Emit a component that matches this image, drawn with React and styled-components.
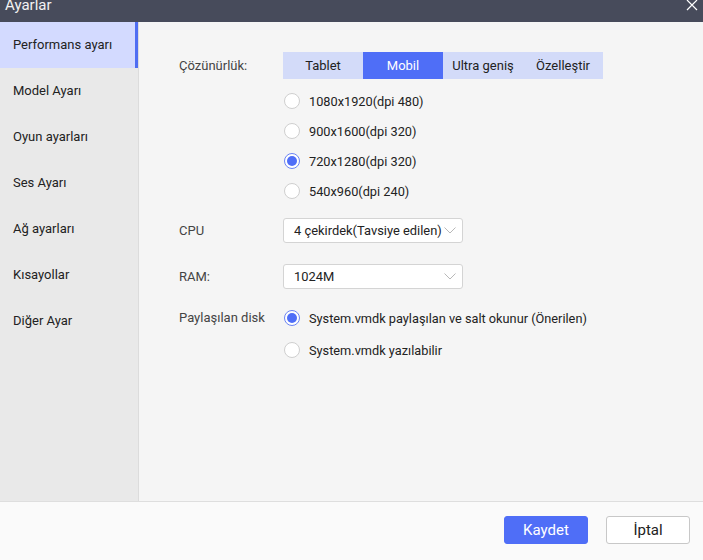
import React, { useState } from 'react'
import styled, { createGlobalStyle } from 'styled-components'

const GlobalStyle = createGlobalStyle`
  html, body {
    margin: 0;
    padding: 0;
    width: 703px;
    height: 560px;
    overflow: hidden;
    font-family: Roboto, "Liberation Sans", Arial, sans-serif;
  }
  * { box-sizing: border-box; }
`

const Window = styled.div`
  width: 703px;
  height: 560px;
  display: flex;
  flex-direction: column;
  background: #f5f5f5;
`

const TitleBar = styled.div`
  height: 22px;
  flex-shrink: 0;
  background: #474b5b;
  display: flex;
  justify-content: space-between;
  align-items: flex-start;
  overflow: hidden;
`

const Title = styled.div`
  color: #f2f2f2;
  font-size: 15px;
  line-height: 10px;
  padding-left: 5px;
`

const Close = styled.div`
  width: 12px;
  height: 12px;
  margin: -1px 5px 0 0;
  svg { display: block; }
`

const Body = styled.div`
  flex: 1;
  display: flex;
  min-height: 0;
`

const Sidebar = styled.div`
  width: 139px;
  flex-shrink: 0;
  background: #e9e9e9;
  border-right: 1px solid #dcdcdc;
`

const NavItem = styled.div`
  height: 46px;
  line-height: 46px;
  padding-left: 13px;
  font-size: 13px;
  color: #222;
  background: ${p => p.active ? '#d3daff' : 'transparent'};
  border-right: 3px solid ${p => p.active ? '#4f6df2' : 'transparent'};
`

const Content = styled.div`
  flex: 1;
  padding: 30px 0 0 40px;
`

const Row = styled.div`
  display: flex;
  align-items: ${p => p.top ? 'flex-start' : 'center'};
  margin-top: ${p => p.mt || 0}px;
`

const Label = styled.div`
  width: 104px;
  flex-shrink: 0;
  font-size: 13px;
  color: #444;
  padding-top: ${p => p.pt || 0}px;
`

const Segments = styled.div`
  display: flex;
  background: #d3dbf9;
`

const Segment = styled.div`
  width: 80px;
  height: 27px;
  line-height: 27px;
  text-align: center;
  font-size: 13px;
  color: ${p => p.active ? '#fff' : '#222'};
  background: ${p => p.active ? '#4f6ef7' : 'transparent'};
`

const RadioList = styled.div`
  display: flex;
  flex-direction: column;
  margin-left: 104px;
  margin-top: 7px;
`

const RadioRow = styled.div`
  height: ${p => p.h || 30}px;
  display: flex;
  align-items: center;
  padding-left: 1px;
  font-size: 12.75px;
  color: #222;
`

const Circle = styled.span`
  width: 16px;
  height: 16px;
  border-radius: 50%;
  background: #fff;
  border: 1px solid ${p => p.checked ? '#6b84f3' : '#cfcfcf'};
  display: flex;
  align-items: center;
  justify-content: center;
  margin-right: 9px;
  flex-shrink: 0;

  &::after {
    content: '';
    width: 10px;
    height: 10px;
    border-radius: 50%;
    background: ${p => p.checked ? '#4f6ef7' : 'transparent'};
  }
`

const Select = styled.div`
  width: 180px;
  height: 25px;
  background: #fff;
  border: 1px solid #d4d4d4;
  border-radius: 3px;
  display: flex;
  align-items: center;
  justify-content: space-between;
  padding: 0 6px 0 10px;
  font-size: 12.9px;
  color: #222;
  svg { flex-shrink: 0; }
`

const Footer = styled.div`
  height: 59px;
  flex-shrink: 0;
  background: #fafafa;
  border-top: 1px solid #dedede;
  display: flex;
  justify-content: flex-end;
  align-items: center;
  gap: 18px;
  padding: 0 13px 2px 0;
`

const Button = styled.button`
  width: 84px;
  height: 28px;
  border-radius: 3px;
  font-family: inherit;
  font-size: 15px;
  cursor: pointer;
  background: ${p => p.primary ? '#4f6ef7' : '#fff'};
  color: ${p => p.primary ? '#fff' : '#222'};
  border: 1px solid ${p => p.primary ? '#4f6ef7' : '#c8c8c8'};
`

const Chevron = () => (
  <svg width="12" height="7" viewBox="0 0 12 7">
    <path d="M0.5 0.5 L6 6 L11.5 0.5" fill="none" stroke="#b8b8b8" strokeWidth="1" />
  </svg>
)

const Radio = ({ checked, children, h }) => (
  <RadioRow h={h}>
    <Circle checked={checked} />
    {children}
  </RadioRow>
)

const navItems = ['Performans ayarı', 'Model Ayarı', 'Oyun ayarları', 'Ses Ayarı', 'Ağ ayarları', 'Kısayollar', 'Diğer Ayar']
const modes = ['Tablet', 'Mobil', 'Ultra geniş', 'Özelleştir']
const resolutions = ['1080x1920(dpi 480)', '900x1600(dpi 320)', '720x1280(dpi 320)', '540x960(dpi 240)']

export default function App () {
  const [mode, setMode] = useState('Mobil')
  const [res, setRes] = useState(2)

  return (
    <Window>
      <GlobalStyle />
      <TitleBar>
        <Title>Ayarlar</Title>
        <Close>
          <svg width="12" height="12" viewBox="0 0 12 12">
            <path d="M1 1 L11 11 M11 1 L1 11" stroke="#fff" strokeWidth="1.2" />
          </svg>
        </Close>
      </TitleBar>
      <Body>
        <Sidebar>
          {navItems.map((n, i) => <NavItem key={n} active={i === 0}>{n}</NavItem>)}
        </Sidebar>
        <Content>
          <Row>
            <Label>Çözünürlük:</Label>
            <Segments>
              {modes.map(m => (
                <Segment key={m} active={m === mode} onClick={() => setMode(m)}>{m}</Segment>
              ))}
            </Segments>
          </Row>
          <RadioList>
            {resolutions.map((r, i) => (
              <div key={r} onClick={() => setRes(i)}>
                <Radio checked={i === res}>{r}</Radio>
              </div>
            ))}
          </RadioList>
          <Row mt={12}>
            <Label>CPU</Label>
            <Select>4 çekirdek(Tavsiye edilen)<Chevron /></Select>
          </Row>
          <Row mt={21}>
            <Label>RAM:</Label>
            <Select>1024M<Chevron /></Select>
          </Row>
          <Row top mt={14}>
            <Label pt={7}>Paylaşılan disk</Label>
            <div>
              <Radio checked h={30}>System.vmdk paylaşılan ve salt okunur (Önerilen)</Radio>
              <Radio h={34}>System.vmdk yazılabilir</Radio>
            </div>
          </Row>
        </Content>
      </Body>
      <Footer>
        <Button primary>Kaydet</Button>
        <Button>İptal</Button>
      </Footer>
    </Window>
  )
}
